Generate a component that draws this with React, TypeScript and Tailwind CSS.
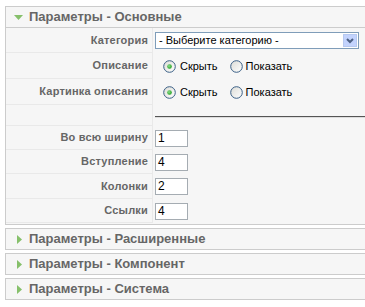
import React from "react";

const Radio = ({ checked }: { checked?: boolean }) => (
  <svg width="13" height="13" viewBox="0 0 13 13" className="shrink-0">
    <defs>
      <linearGradient id="rg" x1="0" y1="0" x2="1" y2="1">
        <stop offset="0" stopColor="#dcdcd6" />
        <stop offset="1" stopColor="#ffffff" />
      </linearGradient>
      <radialGradient id="gd" cx="0.4" cy="0.4" r="0.6">
        <stop offset="0" stopColor="#8fe08f" />
        <stop offset="1" stopColor="#21a121" />
      </radialGradient>
    </defs>
    <circle cx="6.5" cy="6.5" r="5.8" fill="url(#rg)" stroke="#3a5f86" strokeWidth="1" />
    {checked && <circle cx="6.5" cy="6.5" r="2.3" fill="url(#gd)" />}
  </svg>
);

const Header = ({ title, open }: { title: string; open?: boolean }) => (
  <div className="h-[20px] flex items-center bg-[#f6f6f6] text-[#666] text-[13px] font-bold">
    {open ? (
      <svg width="9" height="5" viewBox="0 0 9 5" className="ml-[8px] mr-[6px]">
        <polygon points="0,0 9,0 4.5,5" fill="#86c06b" />
      </svg>
    ) : (
      <svg width="5" height="9" viewBox="0 0 5 9" className="ml-[11px] mr-[7px]">
        <polygon points="0,0 5,4.5 0,9" fill="#86c06b" />
      </svg>
    )}
    <span>{title}</span>
  </div>
);

const Row = ({ label, h, children }: { label: string; h: string; children?: React.ReactNode }) => (
  <div className={`flex ${h}`}>
    <div className="w-[147px] shrink-0 border-b border-r border-[#e9e9e9] flex items-center justify-end pr-[4px] text-[11px] font-bold text-[#666] tracking-[0.2px]">
      {label}
    </div>
    <div className="flex-1 flex items-center pl-[2px]">{children}</div>
  </div>
);

const NumInput = ({ v }: { v: string }) => (
  <div className="w-[33px] h-[17px] border border-[#a5acb2] bg-white text-[12px] text-black pl-[2px] leading-[15px]">
    {v}
  </div>
);

const Radios = () => (
  <div className="flex items-center text-[11px] text-black">
    <span className="ml-[8px] flex"><Radio checked /></span>
    <span className="ml-[4px]">Скрыть</span>
    <span className="ml-[12px] flex"><Radio /></span>
    <span className="ml-[3px]">Показать</span>
  </div>
);

export default function App() {
  return (
    <div className="w-[365px] h-[307px] overflow-hidden bg-white font-['Liberation_Sans',Arial,sans-serif]">
      <div className="pt-[6px] pl-[5px] w-[420px]">
        <div className="border border-[#ccc]">
          <div className="border-b border-[#ccc]">
            <Header title="Параметры - Основные" open />
          </div>
          <div className="bg-[#f6f6f6] pb-[1px]">
            <Row label="Категория" h="h-[25px]">
              <div className="w-[204px] h-[17px] border border-[#7f9db9] bg-white flex items-center justify-between">
                <span className="text-[11px] text-black pl-[3px]">- Выберите категорию -</span>
                <div className="w-[14px] h-[13px] mr-[1px] bg-[#c3d3fd] border border-[#b7c9f0] flex items-center justify-center">
                  <svg width="8" height="6" viewBox="0 0 8 6">
                    <polyline points="1,1 4,4 7,1" fill="none" stroke="#4d6185" strokeWidth="2" />
                  </svg>
                </div>
              </div>
            </Row>
            <Row label="Описание" h="h-[26px]">
              <Radios />
            </Row>
            <Row label="Картинка описания" h="h-[26px]">
              <Radios />
            </Row>
            <Row label="" h="h-[21px]">
              <div className="w-full mt-[2px] border-t border-[#555] border-b border-b-[#ddd]" />
            </Row>
            <Row label="Во всю ширину" h="h-[24px]">
              <NumInput v="1" />
            </Row>
            <Row label="Вступление" h="h-[24px]">
              <NumInput v="4" />
            </Row>
            <Row label="Колонки" h="h-[25px]">
              <NumInput v="2" />
            </Row>
            <Row label="Ссылки" h="h-[24px]">
              <NumInput v="4" />
            </Row>
          </div>
        </div>
        <div className="border border-[#ccc] mt-[3px]">
          <Header title="Параметры - Расширенные" />
        </div>
        <div className="border border-[#ccc] mt-[3px]">
          <Header title="Параметры - Компонент" />
        </div>
        <div className="border border-[#ccc] mt-[3px]">
          <Header title="Параметры - Система" />
        </div>
      </div>
    </div>
  );
}
